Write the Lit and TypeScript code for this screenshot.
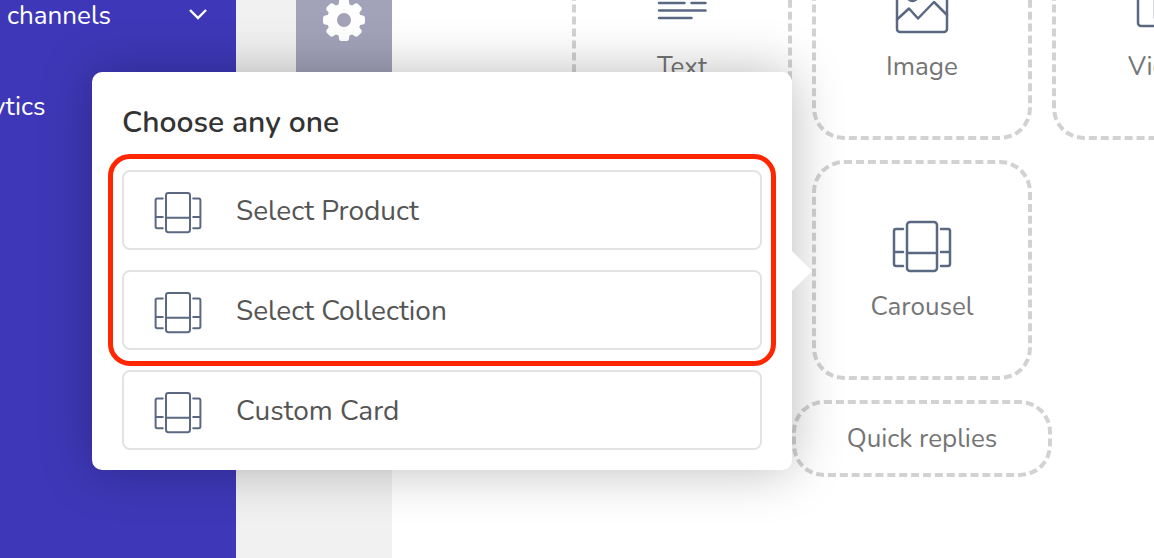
import { LitElement, html, css, svg } from "lit";
import { customElement, property } from "lit/decorators.js";

const carousel = svg`
  <rect x="15" y="1" width="30" height="49" rx="3"></rect>
  <path d="M15 32H45M11 8H4Q2 8 2 10V43Q2 45 4 45H11M2 31H11M49 8H56Q58 8 58 10V43Q58 45 56 45H49M58 31H49"></path>`;

const glyphs = {
  text: svg`<path d="M7 22H32.500M39.500 22H53.500M7 29.500H53.500M7 37H39.500"></path>`,
  image: svg`
    <rect x="5" y="1" width="50" height="50" rx="3"></rect>
    <circle cx="20.500" cy="15" r="5"></circle>
    <path d="M5 38.500L17 27.500L26 37.500L42 21L55 34"></path>`,
  video: svg`
    <rect x="6" y="1" width="50" height="44" rx="3"></rect>
    <path d="M23 8V37L43 23Z"></path>`,
  carousel,
};

@customElement("line-icon")
class LineIcon extends LitElement {
  @property() name: keyof typeof glyphs = "carousel";

  static styles = css`
    :host {
      display: block;
      width: 60px;
      height: 52px;
      color: #5a6882;
    }
    svg {
      display: block;
      width: 100%;
      height: 100%;
      overflow: visible;
      fill: none;
      stroke: currentColor;
      stroke-width: 2.5;
      stroke-linecap: round;
      stroke-linejoin: round;
    }
  `;

  render() {
    return html`<svg viewBox="0 0 60 52" aria-hidden="true">${glyphs[this.name]}</svg>`;
  }
}

@customElement("choice-popup")
class ChoicePopup extends LitElement {
  static styles = css`
    :host {
      display: block;
      box-sizing: border-box;
      padding: 31px 30px 20px;
      border-radius: 10px;
      background: #fff;
      box-shadow: 0 0 52px rgba(0, 0, 0, 0.27);
    }
    :host::after {
      content: "";
      position: absolute;
      left: 100%;
      top: 50%;
      border: 20px solid transparent;
      border-right-width: 0;
      border-left-color: #fff;
      transform: translateY(-50%);
    }
    .title {
      margin: 0 0 27px;
      font-size: 30px;
      line-height: 40px;
      font-weight: 600;
      color: #333;
    }
    .list,
    .marked {
      display: flex;
      flex-direction: column;
      gap: 20px;
    }
    .marked {
      position: relative;
    }
    .marked::after {
      content: "";
      position: absolute;
      inset: -16px -14px;
      border: 5px solid #ff2600;
      border-radius: 22px;
      pointer-events: none;
    }
    .choice {
      display: flex;
      align-items: center;
      gap: 34px;
      height: 80px;
      padding: 2px 30px 0;
      border: 2px solid #e3e3e3;
      border-radius: 8px;
      background: #fff;
      font: inherit;
      font-size: 28px;
      color: #555;
      text-align: left;
      cursor: pointer;
    }
    .choice line-icon {
      width: 48px;
      height: 42px;
      padding-top: 4px;
    }
  `;

  choice(label: string) {
    return html`<button class="choice" type="button">
      <line-icon name="carousel"></line-icon><span>${label}</span>
    </button>`;
  }

  render() {
    return html`
      <h2 class="title">Choose any one</h2>
      <div class="list">
        <div class="marked">
          ${this.choice("Select Product")} ${this.choice("Select Collection")}
        </div>
        ${this.choice("Custom Card")}
      </div>
    `;
  }
}

@customElement("app-root")
class AppRoot extends LitElement {
  static styles = css`
    :host {
      display: flex;
      position: relative;
      height: 100vh;
      overflow: hidden;
      background: #fff;
      font-family: Nunito, Lato, sans-serif;
      font-size: 26px;
      line-height: 32px;
    }
    .sidebar {
      flex: none;
      display: flex;
      flex-direction: column;
      gap: 59px;
      box-sizing: border-box;
      width: 236px;
      background: #3e38b8;
    }
    .link {
      display: flex;
      align-items: center;
      justify-content: space-between;
      padding: 0 28px 0 7px;
      color: #fff;
      text-decoration: none;
    }
    .link.cut {
      padding: 0;
      margin-left: -8px;
    }
    .chevron {
      width: 20px;
      height: 12px;
      padding-bottom: 4px;
      fill: none;
      stroke: #fff;
      stroke-width: 2.4;
    }
    .rail {
      flex: none;
      display: flex;
      align-items: flex-start;
      justify-content: flex-end;
      width: 156px;
      background: #f1f1f1;
    }
    .settings {
      display: flex;
      justify-content: center;
      width: 96px;
      height: 84px;
      padding: 0;
      border: 0;
      background: #a2a3b9;
    }
    .gear {
      width: 44px;
      height: 44px;
      margin-top: -2px;
      fill: #fff;
    }
    .board {
      flex: 1;
      min-width: 0;
      overflow: hidden;
      padding-left: 180px;
    }
    .tiles {
      display: grid;
      grid-template-columns: repeat(3, 220px);
      grid-auto-rows: 220px;
      gap: 20px;
      width: max-content;
      margin-top: -80px;
    }
    .tile,
    .pill {
      box-sizing: border-box;
      border: 4px dashed #d2d2d2;
      border-radius: 32px;
      background: transparent;
      padding: 0;
      font: inherit;
      color: #757575;
      cursor: pointer;
    }
    .tile {
      display: flex;
      flex-direction: column;
      align-items: center;
      justify-content: center;
      gap: 18px;
      padding-top: 4px;
    }
    .middle {
      grid-column: 2;
    }
    .pill {
      grid-column: 1 / -1;
      justify-self: center;
      width: 260px;
      height: 77px;
    }
    .popup {
      position: absolute;
      left: 92px;
      top: 72px;
      width: 700px;
    }
  `;

  tile(label: string, icon: keyof typeof glyphs, extra = "") {
    return html`<button class="tile ${extra}" type="button">
      <line-icon name=${icon}></line-icon><span>${label}</span>
    </button>`;
  }

  render() {
    return html`
      <nav class="sidebar">
        <a class="link" href="#channels">
          channels
          <svg class="chevron" viewBox="0 0 20 12" aria-hidden="true"><path d="M2 2L10 10L18 2"></path></svg>
        </a>
        <a class="link cut" href="#analytics">ytics</a>
      </nav>
      <div class="rail">
        <button class="settings" type="button" aria-label="Settings">
          <svg class="gear" viewBox="0 0 44 44" aria-hidden="true">
            <path
              fill-rule="evenodd"
              d="M19 1H25Q27 1 27 4L27.500 6.500L30 7.600L32.500 6Q34.500 4.500 36 6L39 9Q40.500 10.500 39 12.500L37.300 14.800L38.200 17L41 17.500Q43 18 43 20V24Q43 26 41 26.500L38.200 27L37.300 29.200L39 31.500Q40.500 33.500 39 35L36 38Q34.500 39.500 32.500 38L30 36.400L27.500 37.500L27 40Q27 43 25 43H19Q17 43 17 40L16.500 37.500L14 36.400L11.500 38Q9.500 39.500 8 38L5 35Q3.500 33.500 5 31.500L6.700 29.200L5.800 27L3 26.500Q1 26 1 24V20Q1 18 3 17.500L5.800 17L6.700 14.800L5 12.500Q3.500 10.500 5 9L8 6Q9.500 4.500 11.500 6L14 7.600L16.500 6.500L17 4Q17 1 19 1ZM22 15A7 7 0 1 0 22 29A7 7 0 1 0 22 15Z"
            ></path>
          </svg>
        </button>
      </div>
      <main class="board">
        <div class="tiles">
          ${this.tile("Text", "text")} ${this.tile("Image", "image")} ${this.tile("Video", "video")}
          ${this.tile("Carousel", "carousel", "middle")}
          <button class="pill" type="button">Quick replies</button>
        </div>
      </main>
      <choice-popup class="popup"></choice-popup>
    `;
  }
}
